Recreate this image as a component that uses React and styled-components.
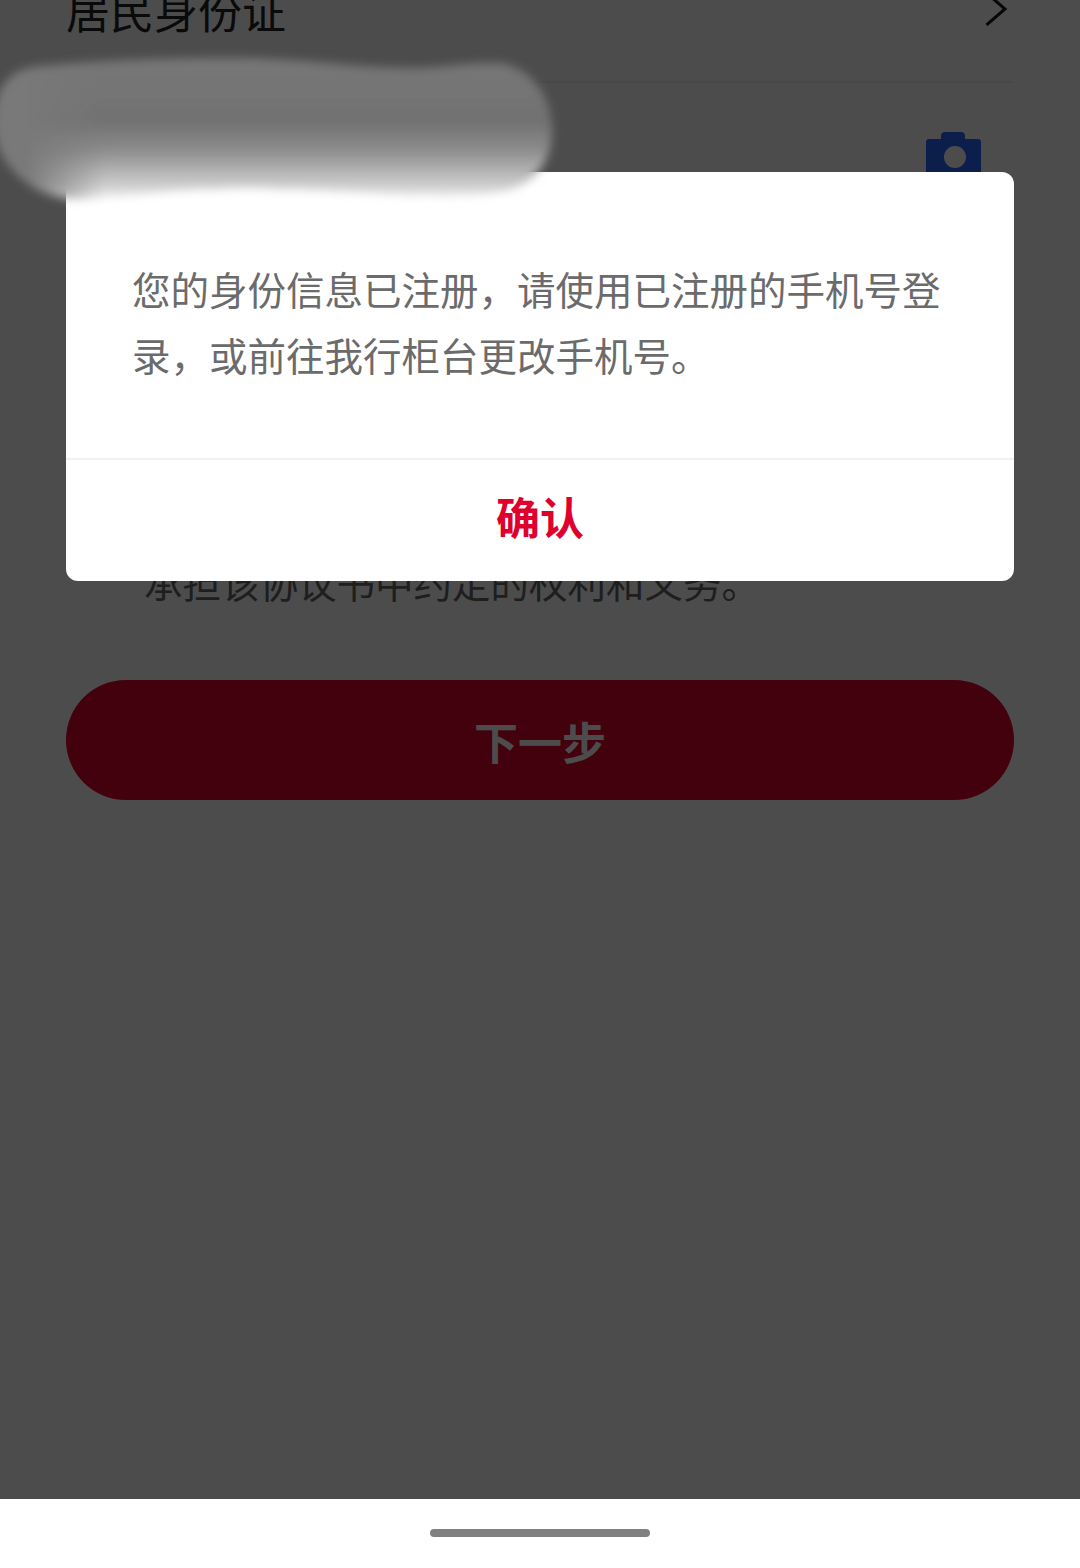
import React from "react";
import styled, { createGlobalStyle } from "styled-components";

const Global = createGlobalStyle`
  html, body { margin: 0; padding: 0; background: #fff; }
  body { font-family: "Noto Sans CJK SC", "Liberation Sans", sans-serif; }
`;
const Shell = styled.div`
  width: 1080px; height: 1568px; display: flex; flex-direction: column; overflow: hidden; position: relative;
`;
const Page = styled.main`
  position: relative; flex: 1; background: #fff; padding: 0 66px; overflow: hidden;
`;
const TypeRow = styled.div`
  height: 99px; margin-top: -18px; display: flex; justify-content: space-between; align-items: flex-start;
  border-bottom: 2px solid #f0f0f0;
`;
const TypeLabel = styled.div`
  font-size: 44px; line-height: 56px; color: #222;
`;
const ChevronIcon = styled.svg`
  margin: 10px 7px 0 0; fill: none;
`;
const PhotoRow = styled.div`
  height: 424px; padding: 49px 33px 0 0; display: flex; justify-content: flex-end; align-items: flex-start;
`;
const Agreement = styled.p`
  margin: 0; padding-left: 78px; font-size: 38.5px; line-height: 50px; color: #666;
`;
const NextButton = styled.button`
  display: block; width: 100%; height: 120px; margin-top: 74px; border: 0; border-radius: 60px;
  background: #e0002d; color: #fff; font: 700 44px/120px "Noto Sans CJK SC", sans-serif; padding: 1px 0 0;
`;
const Scrim = styled.div`
  position: absolute; inset: 0; background: rgba(0,0,0,.7); padding: 172px 66px 0;
`;
const Dialog = styled.section`
  background: #fff; border-radius: 12px; height: 409px; display: flex; flex-direction: column;
`;
const Message = styled.p`
  margin: 0; flex: 0 0 288px; box-sizing: border-box; border-bottom: 2px solid #f2f2f2;
  padding: 83px 66px 0; font-size: 38.5px; line-height: 66px; color: #6b6b6b;
`;
const Confirm = styled.div`
  flex: 1; display: flex; align-items: center; justify-content: center;
  color: #e0002d; font-size: 44px; font-weight: 700; padding-bottom: 10px;
`;
const Smudge = styled.svg`
  position: absolute; left: 0; top: 40px; pointer-events: none;
`;
const HomeArea = styled.footer`
  flex: 0 0 69px; background: #fff; display: flex; justify-content: center; padding-top: 30px; box-sizing: border-box;
`;
const HomeBar = styled.div`
  width: 220px; height: 8px; border-radius: 4px; background: #808080;
`;

const Chevron = () => (
  <ChevronIcon width="22" height="34" viewBox="0 0 22 34">
    <path d="M1.5 1 L20 17 L1.5 33" stroke="#1a1a1a" strokeWidth="3" />
  </ChevronIcon>
);
const Camera = () => (
  <svg width="55" height="50" viewBox="0 0 55 50">
    <path fillRule="evenodd" fill="#2868ff" d="M3 7H15V4a4 4 0 0 1 4-4H35a4 4 0 0 1 4 4v3H52a3 3 0 0 1 3 3V46a3 3 0 0 1-3 3H3a3 3 0 0 1-3-3V10a3 3 0 0 1 3-3ZM29 14a11 11 0 1 0 0 22 11 11 0 1 0 0-22Z" />
  </svg>
);

const BLOB = "M-6 122C-6 90 8 68 40 66C90 62 150 58 230 58C300 58 350 68 410 68C450 68 480 60 505 64C535 72 552 100 552 130C552 160 537 182 507 190C470 197 430 196 380 193C310 189 250 186 180 190C140 193 110 197 85 199C60 201 35 192 18 176C4 162 -6 145 -6 122Z";

export default function App() {
  return (
    <Shell>
      <Global />
      <Page>
        <TypeRow>
          <TypeLabel>居民身份证</TypeLabel>
          <Chevron />
        </TypeRow>
        <PhotoRow><Camera /></PhotoRow>
        <Agreement>承担该协议书中约定的权利和义务。</Agreement>
        <NextButton>下一步</NextButton>
        <Scrim>
          <Dialog>
            <Message>您的身份信息已注册，请使用已注册的手机号登录，或前往我行柜台更改手机号。</Message>
            <Confirm>确认</Confirm>
          </Dialog>
        </Scrim>
        <Smudge width="570" height="175" viewBox="0 40 570 175">
          <defs>
            <linearGradient id="smudgeFill" x1="0" y1="58" x2="0" y2="200" gradientUnits="userSpaceOnUse">
              <stop offset="0" stopColor="#777" />
              <stop offset=".45" stopColor="#717171" />
              <stop offset=".65" stopColor="#8c8c8c" />
              <stop offset=".8" stopColor="#b4b4b4" />
              <stop offset=".92" stopColor="#d4d4d4" />
              <stop offset="1" stopColor="#fff" />
            </linearGradient>
            <linearGradient id="smudgeFade" x1="25" y1="0" x2="105" y2="0" gradientUnits="userSpaceOnUse">
              <stop offset="0" stopColor="#000" />
              <stop offset="1" stopColor="#fff" />
            </linearGradient>
            <mask id="smudgeMask" maskUnits="userSpaceOnUse" x="-20" y="40" width="600" height="175">
              <rect x="-20" y="40" width="600" height="175" fill="url(#smudgeFade)" />
            </mask>
            <filter id="smudgeBlur" x="-5%" y="-15%" width="110%" height="130%">
              <feGaussianBlur stdDeviation="5" />
            </filter>
          </defs>
          <g filter="url(#smudgeBlur)">
            <path fill="#797979" d={BLOB} />
            <path fill="url(#smudgeFill)" mask="url(#smudgeMask)" d={BLOB} />
          </g>
        </Smudge>
      </Page>
      <HomeArea><HomeBar /></HomeArea>
    </Shell>
  );
}
